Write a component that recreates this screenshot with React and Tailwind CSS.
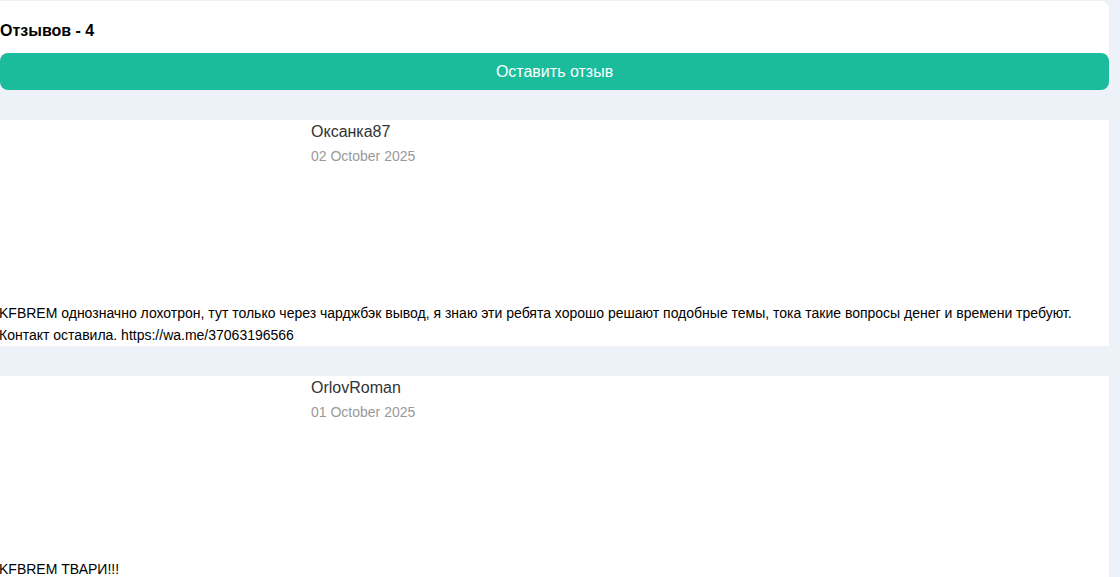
export default function App() {
  const reviews = [
    {
      name: "Оксанка87",
      date: "02 October 2025",
      text: "KFBREM однозначно лохотрон, тут только через чарджбэк вывод, я знаю эти ребята хорошо решают подобные темы, тока такие вопросы денег и времени требуют. Контакт оставила. https://wa.me/37063196566",
    },
    {
      name: "OrlovRoman",
      date: "01 October 2025",
      text: "KFBREM ТВАРИ!!!",
    },
  ];
  return (
    <div
      className="min-h-[577px] w-full bg-[#edf1f8] pt-px overflow-hidden"
      style={{ fontFamily: '"Liberation Sans", Arial, sans-serif' }}
    >
      <div className="w-[1109px] flex flex-col">
        <div className="bg-white rounded-tr-lg rounded-b-lg pt-[21px]">
          <div className="text-base font-bold leading-[18px] text-black">Отзывов - 4</div>
          <button className="mt-[13px] w-full h-[37px] rounded-lg bg-[#1abc9c] text-white text-base leading-[37px]">
            Оставить отзыв
          </button>
        </div>
        <div className="flex flex-col gap-[30px] mt-[30px]">
          {reviews.map((r) => (
            <div key={r.name} className="bg-white">
              <div className="flex h-[182px]">
                <div className="w-[311px] shrink-0" />
                <div className="flex flex-col">
                  <div className="text-base leading-6 text-[#333]">{r.name}</div>
                  <div className="text-sm leading-5 mt-[2px] text-[#999]">{r.date}</div>
                </div>
              </div>
              <div className="-ml-px text-sm leading-[22px] text-black pr-8">{r.text}</div>
            </div>
          ))}
        </div>
      </div>
    </div>
  );
}
